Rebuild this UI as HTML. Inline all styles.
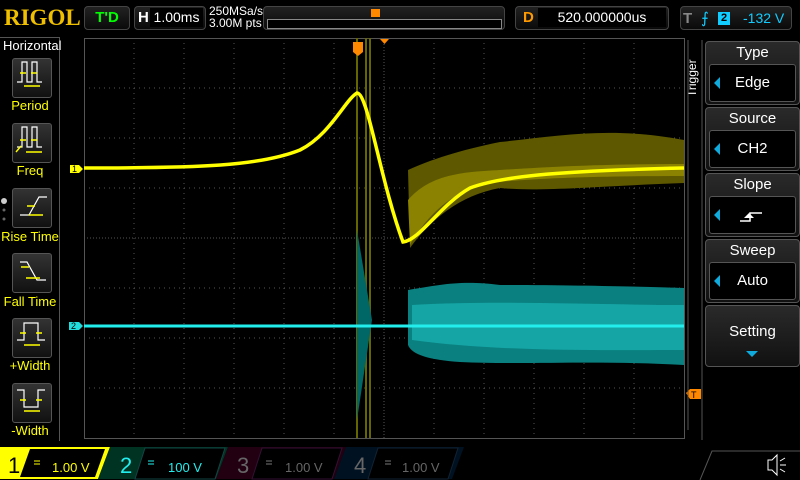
<!DOCTYPE html>
<html><head><meta charset="utf-8"><style>
body{margin:0;width:800px;height:480px;background:#000;overflow:hidden;font-family:"Liberation Sans",sans-serif;position:relative}
.a{position:absolute}
.box{position:absolute;border:1px solid #444;border-radius:4px;background:linear-gradient(#222,#0a0a0a)}
.mb{position:absolute;left:12px;width:38px;height:38px;border:1px solid #555;border-radius:3px;background:linear-gradient(#333,#111)}
.ml{position:absolute;left:0;width:60px;text-align:center;color:#ff0;font-size:13px}
.rb{position:absolute;left:705px;width:93px;height:62px;border:1px solid #555;border-radius:4px;background:linear-gradient(#2a2a2a,#111)}
.rb .t{color:#fff;font-size:15px;text-align:center;margin-top:2px}
.rb .v{position:absolute;left:3px;top:22px;width:85px;height:36px;border:1px solid #555;border-radius:3px;background:#000;color:#fff;font-size:15px;text-align:center;line-height:36px}
.rb .v:before{content:"";position:absolute;left:4px;top:12px;border:6px solid transparent;border-right:6px solid #1ad;border-left:0}
.ov{position:absolute;left:0;top:0;pointer-events:none}
</style></head><body>
<div class="a" style="left:4px;top:5px;color:#f0c000;font-family:'Liberation Serif',serif;font-weight:bold;font-size:23px">RIGOL</div>
<div class="box" style="left:84px;top:6px;width:44px;height:22px;color:#0f0;font-weight:bold;font-size:15px;text-align:center;line-height:22px">T'D</div>
<div class="box" style="left:134px;top:6px;width:70px;height:22px;"><span class="a" style="left:3px;top:2px;color:#fff;font-weight:bold;font-size:15px">H</span><div class="a" style="left:15px;top:1px;width:53px;height:19px;background:#000;color:#fff;font-size:14px;line-height:19px;text-align:center">1.00ms</div></div>
<div class="a" style="left:209px;top:5px;color:#fff;font-size:12px;line-height:12px">250MSa/s<br>3.00M pts</div>
<div class="box" style="left:263px;top:6px;width:240px;height:22px"><div class="a" style="left:3px;top:12px;width:233px;height:8px;border:1px solid #888;background:#000"></div><div class="a" style="left:107px;top:2px;width:9px;height:8px;background:#f80"></div></div>
<div class="box" style="left:515px;top:6px;width:152px;height:22px"><span class="a" style="left:7px;top:2px;color:#f90;font-weight:bold;font-size:15px">D</span><div class="a" style="left:22px;top:1px;width:128px;height:19px;background:#000;color:#fff;font-size:14px;line-height:19px;text-align:center">520.000000us</div></div>
<div class="box" style="left:680px;top:6px;width:110px;height:22px"><span class="a" style="left:2px;top:3px;color:#888;font-weight:bold;font-size:15px">T</span><span class="a" style="left:20px;top:2px;color:#1cf;font-size:15px">⨍</span><span class="a" style="left:37px;top:5px;width:12px;height:13px;background:#1cf;color:#000;font-size:11px;text-align:center;font-weight:bold">2</span><span class="a" style="left:62px;top:3px;color:#1cf;font-size:14px">-132 V</span></div>
<div class="a" style="left:0;top:37px;width:59px;height:403px;border-right:1px solid #555;border-top:1px solid #555"></div>
<div class="a" style="left:3px;top:38px;color:#fff;font-size:13px">Horizontal</div>
<div class="mb" style="top:58px"></div><div class="ml" style="top:98px">Period</div>
<div class="mb" style="top:123px"></div><div class="ml" style="top:163px">Freq</div>
<div class="mb" style="top:188px"></div><div class="ml" style="top:229px">Rise Time</div>
<div class="mb" style="top:253px"></div><div class="ml" style="top:294px">Fall Time</div>
<div class="mb" style="top:318px"></div><div class="ml" style="top:358px">+Width</div>
<div class="mb" style="top:383px"></div><div class="ml" style="top:423px">-Width</div>
<div class="a" style="left:685px;top:97px;color:#fff;font-size:12px;transform:rotate(-90deg);transform-origin:left top;">Trigger</div>
<div class="rb" style="top:41px"><div class="t">Type</div><div class="v">Edge</div></div>
<div class="rb" style="top:107px"><div class="t">Source</div><div class="v">CH2</div></div>
<div class="rb" style="top:173px"><div class="t">Slope</div><div class="v"></div></div>
<div class="rb" style="top:239px"><div class="t">Sweep</div><div class="v">Auto</div></div>
<div class="rb" style="top:305px;height:60px"><div class="t" style="margin-top:17px">Setting</div><div class="a" style="left:40px;top:45px;border:6px solid transparent;border-top:6px solid #1ad;border-bottom:0"></div></div>
<svg class="ov" width="800" height="480">
<g stroke="#fff" fill="none" stroke-width="1.2">
<path d="M17 82h5v-20h5v20h5v-20h5v20h5"/><path d="M17 147h5v-20h5v20h5v-20h5v20h5"/>
<path d="M20 215h9l10-18h8"/><path d="M20 262h7l10 18h9"/><path d="M17 340h7v-17h14v17h7"/><path d="M17 390h7v17h14v-17h7"/>
</g>
<g stroke="#ff0" stroke-width="1.4"><path d="M20 73h6M31 73h6M24 86h16M20 140h6M31 140h6M26 152h16M27 206h8M29 215h14M21 267h8M26 278h14M20 333h6M36 333h6M24 345h16M20 400h6M36 400h6M24 411h16"/><path d="M16 152l5-6"/></g>
<circle cx="4" cy="201" r="3" fill="#ccc"/><circle cx="4" cy="210" r="1.5" fill="#666"/><circle cx="4" cy="219" r="1.5" fill="#666"/>
<rect x="84.5" y="38.5" width="600" height="400" fill="none" stroke="#555"/>
<g stroke="#555" stroke-dasharray="1,4">
<path d="M134 38v400M184 38v400M234 38v400M284 38v400M334 38v400M434 38v400M484 38v400M534 38v400M584 38v400M634 38v400"/>
<path d="M84 88h600M84 138h600M84 188h600M84 288h600M84 338h600M84 388h600"/>
<path d="M384 38v400M84 238h600" stroke-dasharray="1,2"/>
</g>
<path d="M357 38v400M366 38v400M370 38v400" stroke="#660" stroke-width="2"/>
<path d="M408 170C430 160 460 150 500 142 560 136 610 126 684 140L684 183C600 186 540 192 500 188 460 195 430 220 410 248Z" fill="#5e5800"/>
<path d="M408 200C430 175 460 172 500 170 560 166 610 164 684 164L684 176C600 176 540 178 500 182 460 185 430 210 410 245Z" fill="#8a8200"/>
<path d="M84 168C200 168 260 166 300 150 330 135 345 100 357 93 368 93 380 180 403 242 420 240 440 205 470 188 500 177 550 171 684 168" fill="none" stroke="#ff0" stroke-width="3.5"/>
<path d="M408 290C440 285 460 280 500 285 600 285 684 288 684 288V365C600 360 520 365 460 362 430 360 412 355 408 345Z" fill="#0a8080"/>
<path d="M412 305C500 300 600 305 684 305V350C600 350 500 352 412 340Z" fill="#15a5a5"/>
<path d="M357 230L372 320 357 420Z" fill="#066"/>
<path d="M84 326H684" stroke="#2ee" stroke-width="3"/>
<path d="M70 165h9l4 4-4 4h-9z" fill="#ff0"/><text x="72" y="172" font-size="9" font-family="Liberation Sans">1</text>
<path d="M69 322h10l4 4-4 4h-10z" fill="#2dd"/><text x="71" y="329" font-size="9" font-family="Liberation Sans">2</text>
<path d="M353 42h10v10l-5 4-5-4z" fill="#f80"/><path d="M380 39h9l-4.5 5z" fill="#f80"/>
<path d="M686 393l4-4h11v10h-11z" fill="#f80"/><text x="691" y="398" font-size="9" font-family="Liberation Sans">T</text>
<path d="M688 40v390M702 40v400" stroke="#555"/>
<path d="M740 221h10v-8h12" stroke="#fff" fill="none" stroke-width="1.5"/><path d="M744 218l5-5 5 5z" fill="#fff"/>
<path d="M0 447h110l-12 32H0z" fill="#ff0"/><path d="M30 449h75l-10 28H20z" fill="#000"/>
<path d="M110 447h118l-12 32H98z" fill="#032"/><path d="M145 448h80l-10 31h-80z" fill="#000" stroke="#144"/>
<path d="M228 447h118l-12 32H216z" fill="#201"/><path d="M262 448h80l-10 31h-80z" fill="#000" stroke="#313"/>
<path d="M346 447h118l-12 32H334z" fill="#012"/><path d="M378 448h80l-10 31h-80z" fill="#000" stroke="#123"/>
<path d="M34 461h6M34 464h6" stroke="#ff0" stroke-width="1"/>
<path d="M148 461h6M148 464h6" stroke="#2ee"/><path d="M266 461h6M266 464h6M385 461h6M385 464h6" stroke="#777"/>
<path d="M700 480l12-29h88" stroke="#555" fill="none"/>
<path d="M768 460h4l5-5v20l-5-5h-4z" fill="none" stroke="#fff"/><path d="M780 461l5-3M780 465h6M780 469l5 3" stroke="#fff"/>
</svg>
<div class="a" style="left:8px;top:453px;color:#000;font-size:22px">1</div>
<div class="a" style="left:52px;top:460px;color:#ff0;font-size:13px">1.00 V</div>
<div class="a" style="left:120px;top:453px;color:#2ee;font-size:22px">2</div>
<div class="a" style="left:168px;top:460px;color:#2ee;font-size:13px">100 V</div>
<div class="a" style="left:237px;top:453px;color:#666;font-size:22px">3</div>
<div class="a" style="left:285px;top:460px;color:#666;font-size:13px">1.00 V</div>
<div class="a" style="left:354px;top:453px;color:#666;font-size:22px">4</div>
<div class="a" style="left:402px;top:460px;color:#666;font-size:13px">1.00 V</div>
</body></html>
